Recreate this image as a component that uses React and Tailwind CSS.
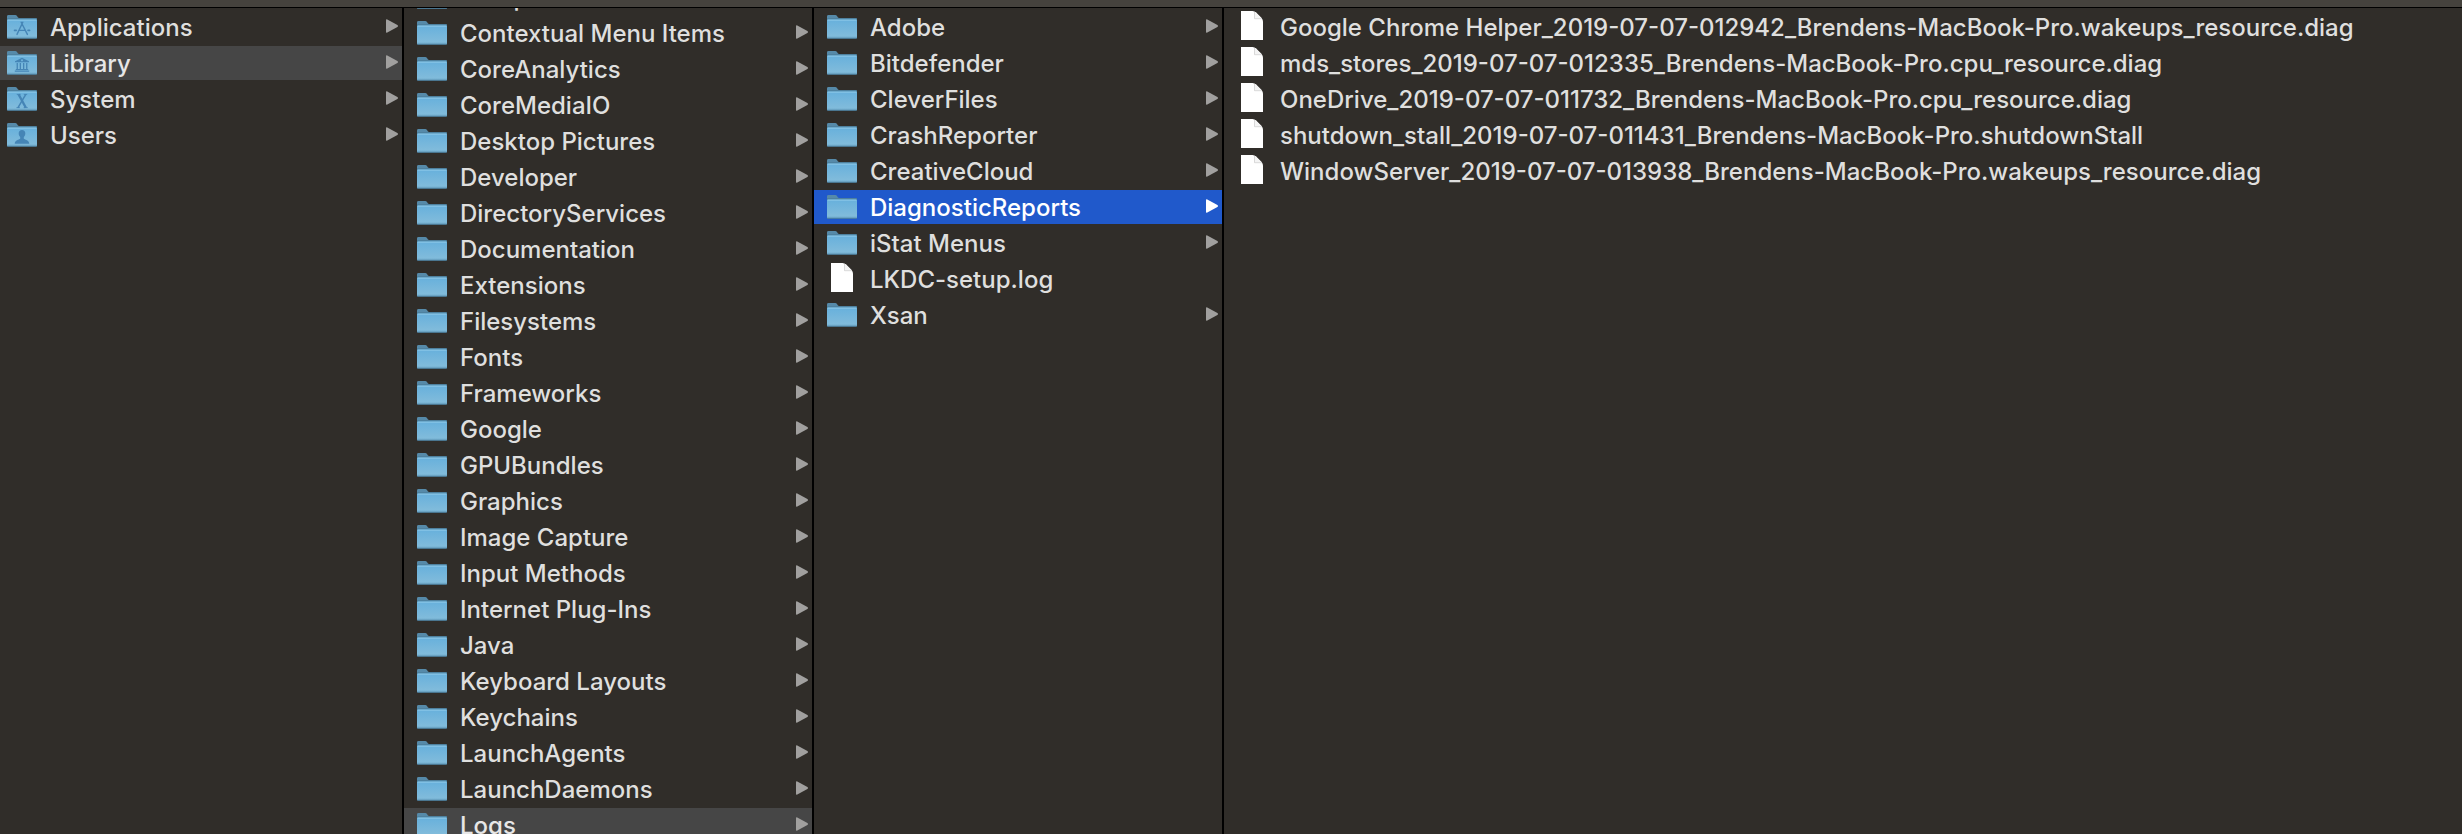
const folders = (names) => names.map((name) => ({ name, kind: "folder" }));
const documents = (names) => names.map((name) => ({ name, kind: "document" }));

const ROOT = [
  { name: "Applications", kind: "folder", emblem: "applications" },
  { name: "Library", kind: "folder", emblem: "library", state: "open" },
  { name: "System", kind: "folder", emblem: "system" },
  { name: "Users", kind: "folder", emblem: "users" },
];

const LIBRARY = [
  ...folders([
    "Components",
    "Contextual Menu Items",
    "CoreAnalytics",
    "CoreMediaIO",
    "Desktop Pictures",
    "Developer",
    "DirectoryServices",
    "Documentation",
    "Extensions",
    "Filesystems",
    "Fonts",
    "Frameworks",
    "Google",
    "GPUBundles",
    "Graphics",
    "Image Capture",
    "Input Methods",
    "Internet Plug-Ins",
    "Java",
    "Keyboard Layouts",
    "Keychains",
    "LaunchAgents",
    "LaunchDaemons",
  ]),
  { name: "Logs", kind: "folder", state: "open" },
];

const LOGS = [
  ...folders(["Adobe", "Bitdefender", "CleverFiles", "CrashReporter", "CreativeCloud"]),
  { name: "DiagnosticReports", kind: "folder", state: "active" },
  ...folders(["iStat Menus"]),
  ...documents(["LKDC-setup.log"]),
  ...folders(["Xsan"]),
];

const REPORTS = documents([
  "Google Chrome Helper_2019-07-07-012942_Brendens-MacBook-Pro.wakeups_resource.diag",
  "mds_stores_2019-07-07-012335_Brendens-MacBook-Pro.cpu_resource.diag",
  "OneDrive_2019-07-07-011732_Brendens-MacBook-Pro.cpu_resource.diag",
  "shutdown_stall_2019-07-07-011431_Brendens-MacBook-Pro.shutdownStall",
  "WindowServer_2019-07-07-013938_Brendens-MacBook-Pro.wakeups_resource.diag",
]);

function Emblem({ type }) {
  const line = { fill: "none", stroke: "#4585b6", strokeLinecap: "round" };
  if (type === "applications") {
    return (
      <g {...line} strokeWidth="1.4">
        <path d="M15.8 7.2 L10 19.4 M14.200 7.200 L20.400 19.400 M11.500 15.400 H18.200" />
        <path d="M7.500 15.400 H9.200 M21 15.400 H22.600" strokeWidth="1.600" />
      </g>
    );
  }
  if (type === "library") {
    return (
      <g fill="#4585b6">
        <path fillRule="evenodd" d="M15 6.8 L22 10.2 V11.2 H8 V10.2 Z M15 8.2 a1 1 0 1 0 0.01 0 Z" />
        <path d="M9.6 12h1.3v6H9.6z M12.7 12H14v6h-1.3z M16 12h1.3v6H16z M19.1 12h1.3v6h-1.3z M8.8 18h12.4v1H8.8z M7.8 19.6h14.4v1.2H7.8z" />
      </g>
    );
  }
  if (type === "system") {
    return (
      <g {...line} strokeLinecap="butt">
        <path d="M11.6 7.4 L18.8 20.6" strokeWidth="2.2" />
        <path d="M18.8 7.4 L11 20.6" strokeWidth="1.5" />
        <path d="M9.800 7.400h3.800 M16.800 7.400h3.400 M9.500 20.600h3.300 M16.700 20.600h4" strokeWidth="0.9" />
      </g>
    );
  }
  if (type === "users") {
    return (
      <path
        fill="#4585b6"
        d="M15 7c2.100 0 3.300 1.300 3.300 3.300 0 1.700-.6 2.800-1.500 3.700v1.700c1.300 1 5.200 1.300 5.500 5H7.700c.3-3.700 4.200-4 5.500-5v-1.700c-.9-.9-1.500-2-1.500-3.700 0-2 1.200-3.300 3.300-3.300Z"
      />
    );
  }
  return null;
}

function FolderIcon({ emblem }) {
  return (
    <svg className="h-6 w-[30px] shrink-0" viewBox="0 0 30 24" aria-hidden="true">
      <path d="M0 1.400Q0 0 1.400 0H8.200Q9.400 0 10 1L10.800 2.200Q11.200 2.900 12.200 2.900H29Q30 2.900 30 4V8H0Z" fill="#568aa9" />
      <path d="M0 4.200H30" stroke="#3f6e8a" strokeWidth="1" />
      <path d="M0 5.500Q0 4.400 1 4.400H29Q30 4.400 30 5.500V22.800Q30 23.600 29 23.600H1Q0 23.600 0 22.800Z" fill="url(#folderFace)" />
      <path d="M0.500 5.100H29.500" stroke="#91cbea" strokeWidth="1" />
      <path d="M0.300 23.300H29.700" stroke="#4a7c9a" strokeWidth="0.900" />
      <Emblem type={emblem} />
    </svg>
  );
}

function DocumentIcon() {
  return (
    <span className="flex w-[30px] shrink-0 justify-center">
      <svg className="mb-1 h-[29px] w-[22px]" viewBox="0 0 22 29" aria-hidden="true">
        <path d="M0 0H11.500Q13.500 0 15 1.500L20.500 7Q22 8.500 22 10.500V29H0Z" fill="#ffffff" />
        <path d="M13.500 0.800V7.600H21L15 1.500Z" fill="#f4f4f4" />
        <path d="M13.500 1V7.700H21" fill="none" stroke="#cfcfcf" strokeWidth="0.800" />
      </svg>
    </span>
  );
}

function Arrow({ active }) {
  return (
    <svg
      className={`mb-0.5 h-3.5 w-3 shrink-0 ${active ? "fill-white" : "fill-[#a1a09f]"}`}
      viewBox="0 0 12 14"
      aria-hidden="true"
    >
      <path d="M0 1.200Q0 -0.300 1.300 0.400L11.400 6.100Q12.600 7 11.400 7.900L1.300 13.600Q0 14.300 0 12.800Z" />
    </svg>
  );
}

const ROW_STATES = {
  open: "bg-[#464646] text-[#e6e6e6]",
  active: "bg-[#2059cb] text-white",
  idle: "text-[#dfdfde]",
};

function Row({ item, inset }) {
  const state = item.state ?? "idle";
  return (
    <li>
      <button
        type="button"
        aria-current={item.state ? "true" : undefined}
        className={`flex h-[34px] w-full items-center gap-[13px] pr-1 text-left ${inset} ${ROW_STATES[state]}`}
      >
        {item.kind === "folder" ? <FolderIcon emblem={item.emblem} /> : <DocumentIcon />}
        <span className="flex-1 truncate pt-0.5 leading-8">{item.name}</span>
        {item.kind === "folder" && <Arrow active={state === "active"} />}
      </button>
    </li>
  );
}

function Column({ label, items, width, inset = "pl-[13px]", offset = "pt-0.5" }) {
  return (
    <section aria-label={label} className={`overflow-hidden border-black ${width}`}>
      <ul className={`flex flex-col gap-0.5 ${offset}`}>
        {items.map((item) => (
          <Row key={item.name} item={item} inset={inset} />
        ))}
      </ul>
    </section>
  );
}

export default function App() {
  return (
    <main className="flex h-screen flex-col overflow-hidden bg-[#302d29] font-['Inter','Liberation_Sans',sans-serif] text-2xl font-medium">
      <svg className="absolute size-0" aria-hidden="true">
        <defs>
          <linearGradient id="folderFace" x1="0" y1="0" x2="0" y2="1">
            <stop offset="0" stopColor="#67b0dc" />
            <stop offset="0.850" stopColor="#80bbdb" />
            <stop offset="1" stopColor="#6ba6c6" />
          </linearGradient>
        </defs>
      </svg>
      <header className="h-2 shrink-0 border-b border-black bg-[#45423d]" />
      <div className="flex min-h-0 flex-1">
        <Column label="Macintosh HD" items={ROOT} width="w-[404px] shrink-0 border-r-2" inset="pl-[7px]" />
        <Column label="Library" items={LIBRARY} width="w-[410px] shrink-0 border-r-2" offset="-mt-7" />
        <Column label="Logs" items={LOGS} width="w-[410px] shrink-0 border-r-2" />
        <Column label="DiagnosticReports" items={REPORTS} width="min-w-0 flex-1" />
      </div>
    </main>
  );
}
